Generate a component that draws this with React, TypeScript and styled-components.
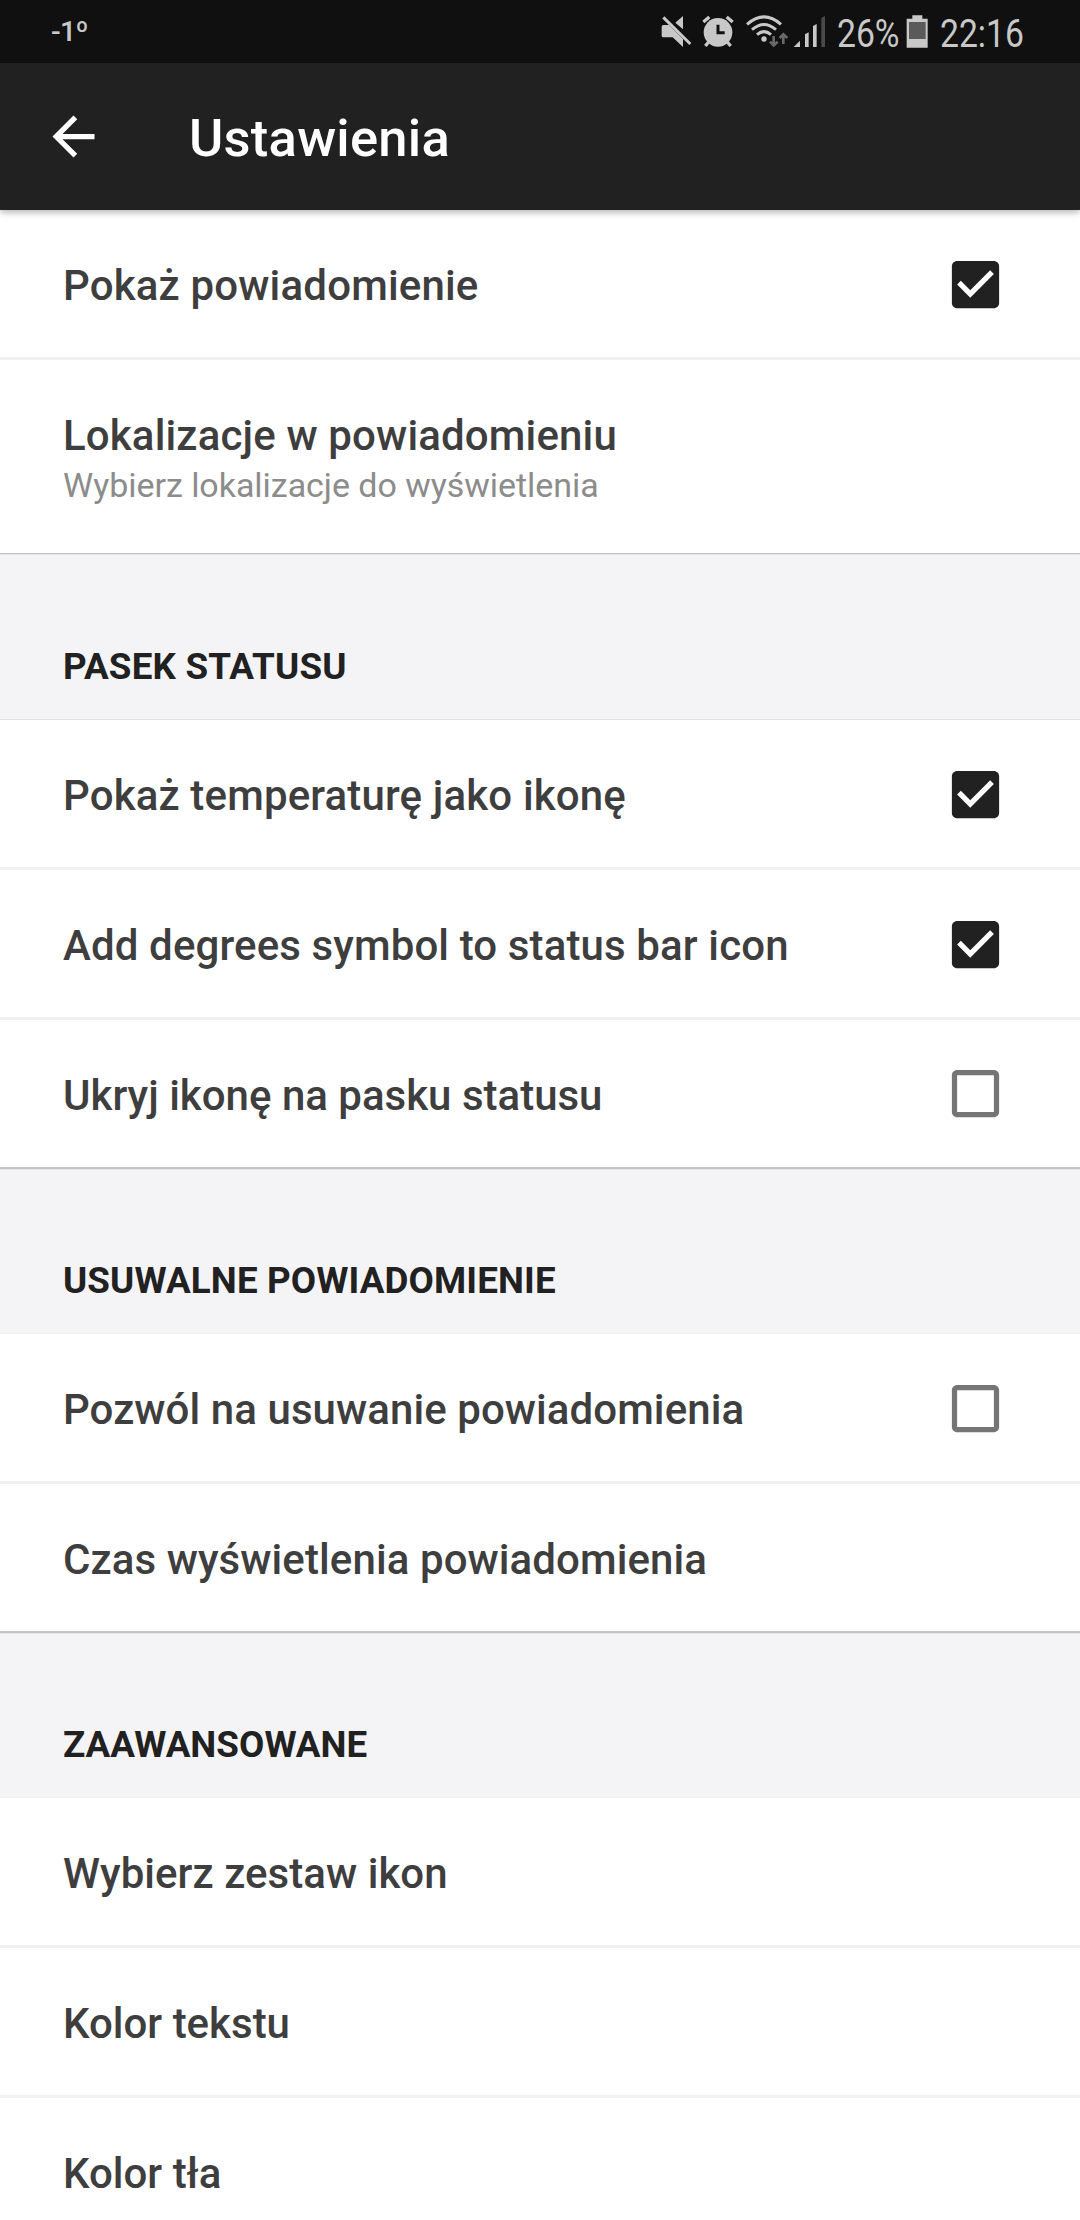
import React from "react";
import styled, { createGlobalStyle } from "styled-components";

const GlobalStyle = createGlobalStyle`
  * { box-sizing: border-box; }
  html, body { margin: 0; padding: 0; }
  body {
    background: #f4f4f7;
    font-family: Roboto, "Noto Sans", sans-serif;
    overflow: hidden;
  }
`;

const Screen = styled.div`
  width: 1080px;
  height: 2220px;
  overflow: hidden;
  display: flex;
  flex-direction: column;
  background: #f4f4f7;
`;

const StatusBar = styled.div`
  flex: none;
  height: 63px;
  padding: 14px 57px 0 51px;
  display: flex;
  justify-content: space-between;
  align-items: flex-start;
  background: #101010;
  color: #c8c8c8;
`;

const Temperature = styled.span`
  font-size: 28.5px;
  line-height: 36px;
  font-weight: 500;
  letter-spacing: -0.7px;
`;

const StatusIcons = styled.div`
  display: flex;
  align-items: flex-start;
  svg { display: block; flex: none; }
`;

const StatusText = styled.span<{ $width: number; $gap: number }>`
  width: ${(p) => p.$width}px;
  margin-left: ${(p) => p.$gap}px;
  font-size: 38.5px;
  line-height: 39px;
  white-space: nowrap;
  transform: scaleX(0.875);
  transform-origin: left center;
`;

const AppBar = styled.header`
  flex: none;
  height: 147px;
  display: flex;
  align-items: center;
  padding-left: 42px;
  background: #212121;
  color: #fff;
  position: relative;
  z-index: 1;
  box-shadow: 0 3px 6px rgba(0, 0, 0, 0.26);
  svg { display: block; flex: none; }
`;

const Title = styled.h1`
  margin: 3px 0 0 84px;
  font-size: 52.5px;
  line-height: 62px;
  font-weight: 500;
  letter-spacing: 0.25px;
`;

const Group = styled.section<{ $edge: number }>`
  flex: none;
  background: #fff;
  box-shadow: 0 ${(p) => p.$edge}px 0 #c4c4c5, 0 ${(p) => p.$edge + 1}px 0 #e4e4e6;
`;

const Row = styled.div<{ $height: number; $divided: boolean }>`
  height: ${(p) => p.$height + (p.$divided ? 3 : 0)}px;
  padding: 0 73px 0 63px;
  display: flex;
  align-items: center;
  justify-content: space-between;
  border-top: ${(p) => (p.$divided ? "3px solid #f1f1f1" : "none")};
`;

const Labels = styled.div<{ $twoLine: boolean }>`
  display: flex;
  flex-direction: column;
  padding-top: ${(p) => (p.$twoLine ? 5 : 3)}px;
`;

const Label = styled.span<{ $tracking: number }>`
  font-size: 42px;
  line-height: 49px;
  font-weight: 500;
  letter-spacing: ${(p) => p.$tracking}px;
  color: #3e3e3e;
  white-space: nowrap;
`;

const Summary = styled.span`
  margin-top: 3px;
  font-size: 34px;
  line-height: 44px;
  letter-spacing: -0.04px;
  color: #8c8c8c;
  white-space: nowrap;
`;

const SectionHeader = styled.h2<{ $line: string; $tracking: number }>`
  flex: none;
  height: 167px;
  margin: 0;
  padding: 92px 63px 0;
  border-bottom: 1px solid ${(p) => p.$line};
  font-size: 36.75px;
  line-height: 43px;
  font-weight: 700;
  letter-spacing: ${(p) => p.$tracking}px;
  color: #212121;
`;

const CheckIcon = styled.svg<{ $nudge: number }>`
  display: block;
  flex: none;
  width: 63px;
  height: 63px;
  margin-top: ${(p) => p.$nudge}px;
`;

function Checkbox({ checked, nudge = 2 }: { checked: boolean; nudge?: number }) {
  return (
    <CheckIcon viewBox="0 0 24 24" $nudge={nudge}>
      {checked ? (
        <path
          fill="#212121"
          d="M19 3H5c-1.11 0-2 .9-2 2v14c0 1.1.89 2 2 2h14c1.11 0 2-.9 2-2V5c0-1.1-.89-2-2-2zm-9 14l-5-5 1.41-1.41L10 14.17l7.59-7.59L19 8l-9 9z"
        />
      ) : (
        <path
          fill="#757575"
          d="M19 5v14H5V5h14m0-2H5c-1.1 0-2 .9-2 2v14c0 1.1.9 2 2 2h14c1.1 0 2-.9 2-2V5c0-1.1-.9-2-2-2z"
        />
      )}
    </CheckIcon>
  );
}

type Item = {
  label: string;
  summary?: string;
  checked?: boolean;
  height?: number;
  tracking?: number;
  nudge?: number;
};

function Items({ items, edge = 2 }: { items: Item[]; edge?: number }) {
  return (
    <Group $edge={edge}>
      {items.map((item, index) => (
        <Row key={item.label} $height={item.height ?? 147} $divided={index > 0}>
          <Labels $twoLine={item.summary !== undefined}>
            <Label $tracking={item.tracking ?? 0}>{item.label}</Label>
            {item.summary && <Summary>{item.summary}</Summary>}
          </Labels>
          {item.checked !== undefined && <Checkbox checked={item.checked} nudge={item.nudge} />}
        </Row>
      ))}
    </Group>
  );
}

function StatusGlyphs() {
  return (
    <svg width="170" height="36" viewBox="54 42 510 108" fill="#c8c8c8">
      {/* muted speaker */}
      <path d="M126 48V88L103 68Z" />
      <path d="M67 75H84L126 117V141L95 112H67Q62 112 62 107V80Q62 75 67 75Z" />
      <path d="M67 52L148 132" stroke="#c8c8c8" strokeWidth="9" />
      {/* alarm clock */}
      <circle cx="231" cy="97" r="43" />
      <g stroke="#c8c8c8" strokeWidth="10" fill="none">
        <path d="M187 66L205 51M257 51L275 66M203 126L193 138M259 126L269 138" />
        <path d="M231 74V98H251" stroke="#101010" strokeWidth="9" />
      </g>
      {/* wifi with traffic arrows */}
      <circle cx="369" cy="117" r="8" />
      <g stroke="#c8c8c8" strokeWidth="9" fill="none">
        <path d="M318 73Q369 28 420 73" />
        <path d="M333 89Q369 58 405 89" />
        <path d="M348 104Q369 86 390 104" />
      </g>
      <g stroke="#686868" strokeWidth="8" fill="none">
        <path d="M398 108V136M387 125L398 136L410 125" />
        <path d="M427 132V103M416 114L427 103L439 114" />
      </g>
      {/* signal strength */}
      <path d="M458 141H477V122Z" />
      <path d="M492 141V103L503 97V141Z" />
      <path d="M516 141V78L527 72V141Z" />
      <path d="M541 141V54L552 48V141Z" fill="#4a4a4a" />
    </svg>
  );
}

export default function App() {
  return (
    <>
      <GlobalStyle />
      <Screen>
        <StatusBar>
          <Temperature>-1º</Temperature>
          <StatusIcons>
            <StatusGlyphs />
            <StatusText $width={69} $gap={8}>26%</StatusText>
            <svg width="23" height="36" viewBox="259 42 69 108">
              <path fill="#c8c8c8" d="M278 46H308V56H324V143H261V56H278Z" />
              <path fill="#5a5a5a" d="M268 66H318V117H268Z" />
            </svg>
            <StatusText $width={83} $gap={11}>22:16</StatusText>
          </StatusIcons>
        </StatusBar>
        <AppBar>
          <svg width="63" height="63" viewBox="0 0 24 24" fill="#fff">
            <path d="M20 11H7.83l5.59-5.59L12 4l-8 8 8 8 1.41-1.41L7.83 13H20v-2z" />
          </svg>
          <Title>Ustawienia</Title>
        </AppBar>
        <Items
          edge={1}
          items={[
            { label: "Pokaż powiadomienie", checked: true, tracking: 0.17 },
            {
              label: "Lokalizacje w powiadomieniu",
              summary: "Wybierz lokalizacje do wyświetlenia",
              height: 193,
              tracking: 0.15,
            },
          ]}
        />
        <SectionHeader $line="#e2e2e5" $tracking={0.2}>PASEK STATUSU</SectionHeader>
        <Items
          items={[
            { label: "Pokaż temperaturę jako ikonę", checked: true, tracking: 0.15 },
            { label: "Add degrees symbol to status bar icon", checked: true, tracking: 0.12 },
            { label: "Ukryj ikonę na pasku statusu", checked: false, nudge: -1 },
          ]}
        />
        <SectionHeader $line="#f1f1f2" $tracking={0.13}>USUWALNE POWIADOMIENIE</SectionHeader>
        <Items
          items={[
            { label: "Pozwól na usuwanie powiadomienia", checked: false, tracking: 0.07 },
            { label: "Czas wyświetlenia powiadomienia", tracking: 0.09 },
          ]}
        />
        <SectionHeader $line="#f1f1f2" $tracking={0.05}>ZAAWANSOWANE</SectionHeader>
        <Items
          items={[
            { label: "Wybierz zestaw ikon", tracking: 0.05 },
            { label: "Kolor tekstu" },
            { label: "Kolor tła" },
          ]}
        />
      </Screen>
    </>
  );
}
